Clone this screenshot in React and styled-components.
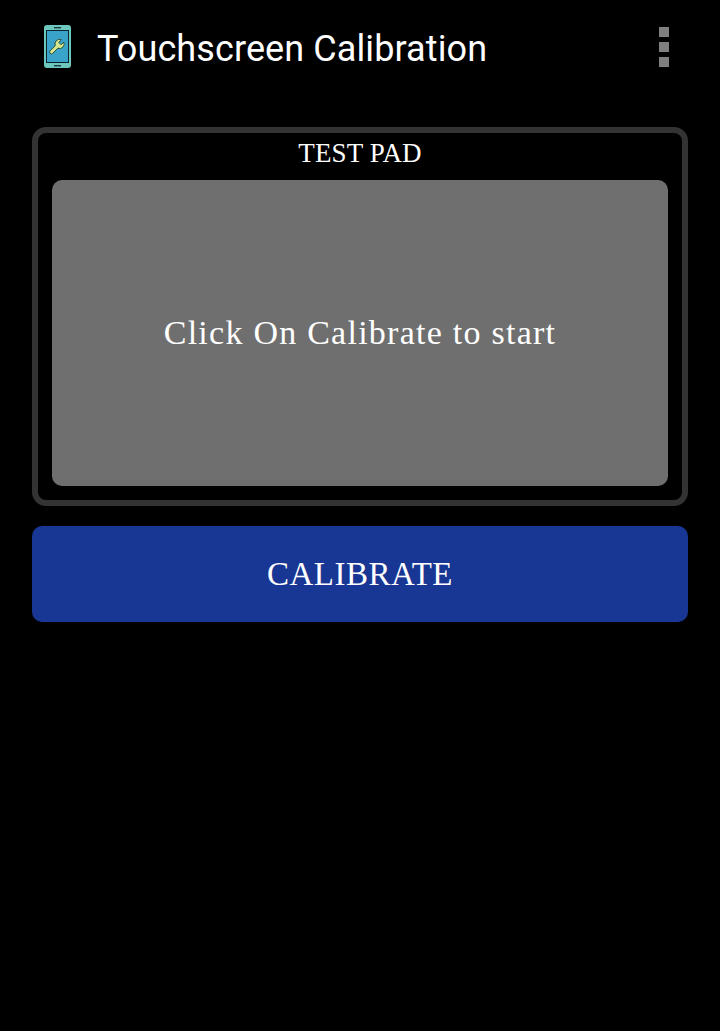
import styled, { createGlobalStyle } from "styled-components";

const GlobalStyle = createGlobalStyle`
  html, body {
    margin: 0;
    padding: 0;
    background: #000;
  }
`;

const Screen = styled.div`
  width: 720px;
  height: 1031px;
  background: #000;
  overflow: hidden;
`;

// === Action bar ===
const ActionBar = styled.header`
  height: 96px;
  display: flex;
  align-items: center;
  padding: 0 51px 0 42px;
  box-sizing: border-box;
`;

const AppIcon = styled.svg`
  width: 32px;
  height: 46px;
  flex: none;
`;

const Title = styled.h1`
  margin: 2px 0 0 23px;
  flex: 1;
  font-family: Roboto, sans-serif;
  font-weight: 400;
  font-size: 36px;
  letter-spacing: 0.1px;
  line-height: 46px;
  color: #fff;
`;

const Overflow = styled.div`
  display: flex;
  flex-direction: column;
  gap: 5px;
  margin-top: -2px;
`;

const Dot = styled.span`
  display: block;
  width: 10px;
  height: 10px;
  background: #7f7f7f;
`;

// === Content ===
const Content = styled.main`
  padding: 31px 32px 0;
  display: flex;
  flex-direction: column;
  gap: 20px;
`;

const Frame = styled.section`
  height: 379px;
  box-sizing: border-box;
  border: 6px solid #333;
  border-radius: 14px;
  padding: 0 14px 14px;
  display: flex;
  flex-direction: column;
`;

const FrameLabel = styled.div`
  height: 47px;
  box-sizing: border-box;
  padding-bottom: 6px;
  display: flex;
  align-items: center;
  justify-content: center;
  font-family: "Liberation Serif", serif;
  font-size: 27px;
  letter-spacing: 0.15px;
  color: #fff;
`;

const Pad = styled.div`
  flex: 1;
  display: flex;
  align-items: center;
  justify-content: center;
  background: #6f6f6f;
  border-radius: 10px;
  font-family: "Liberation Serif", serif;
  font-size: 34px;
  letter-spacing: 1.25px;
  color: #fff;
`;

const CalibrateButton = styled.button`
  height: 96px;
  border: 0;
  border-radius: 10px;
  background: #183693;
  font-family: "Liberation Serif", serif;
  font-size: 33px;
  letter-spacing: 0.5px;
  color: #fff;
`;

export default function App() {
  return (
    <Screen>
      <GlobalStyle />
      <ActionBar>
        <AppIcon viewBox="0 0 32 46">
          <rect x="2" y="0" width="27" height="43" rx="3" fill="#6cc7bd" />
          <rect x="4" y="5" width="23" height="33" fill="#0c2430" />
          <rect x="5" y="6" width="21" height="31" fill="#39a3c9" />
          <rect x="12" y="2" width="7" height="1.4" fill="#1c3a40" />
          <rect x="12" y="40" width="7" height="1.4" fill="#1c3a40" />
          <path
            transform="translate(16.5 20) rotate(45)"
            d="M1.8 10 L1.8 2.73 A4.6 4.6 0 0 0 1.7 -5.77 L1.7 -2 L-1.7 -2 L-1.7 -5.77 A4.6 4.6 0 0 0 -1.8 2.73 L-1.8 10 A1.8 1.8 0 0 0 1.8 10 Z"
            fill="#d5e68c"
            stroke="#1f3a2c"
            strokeWidth="0.8"
            strokeLinejoin="round"
          />
        </AppIcon>
        <Title>Touchscreen Calibration</Title>
        <Overflow>
          <Dot />
          <Dot />
          <Dot />
        </Overflow>
      </ActionBar>
      <Content>
        <Frame>
          <FrameLabel>TEST PAD</FrameLabel>
          <Pad>Click On Calibrate to start</Pad>
        </Frame>
        <CalibrateButton>CALIBRATE</CalibrateButton>
      </Content>
    </Screen>
  );
}
